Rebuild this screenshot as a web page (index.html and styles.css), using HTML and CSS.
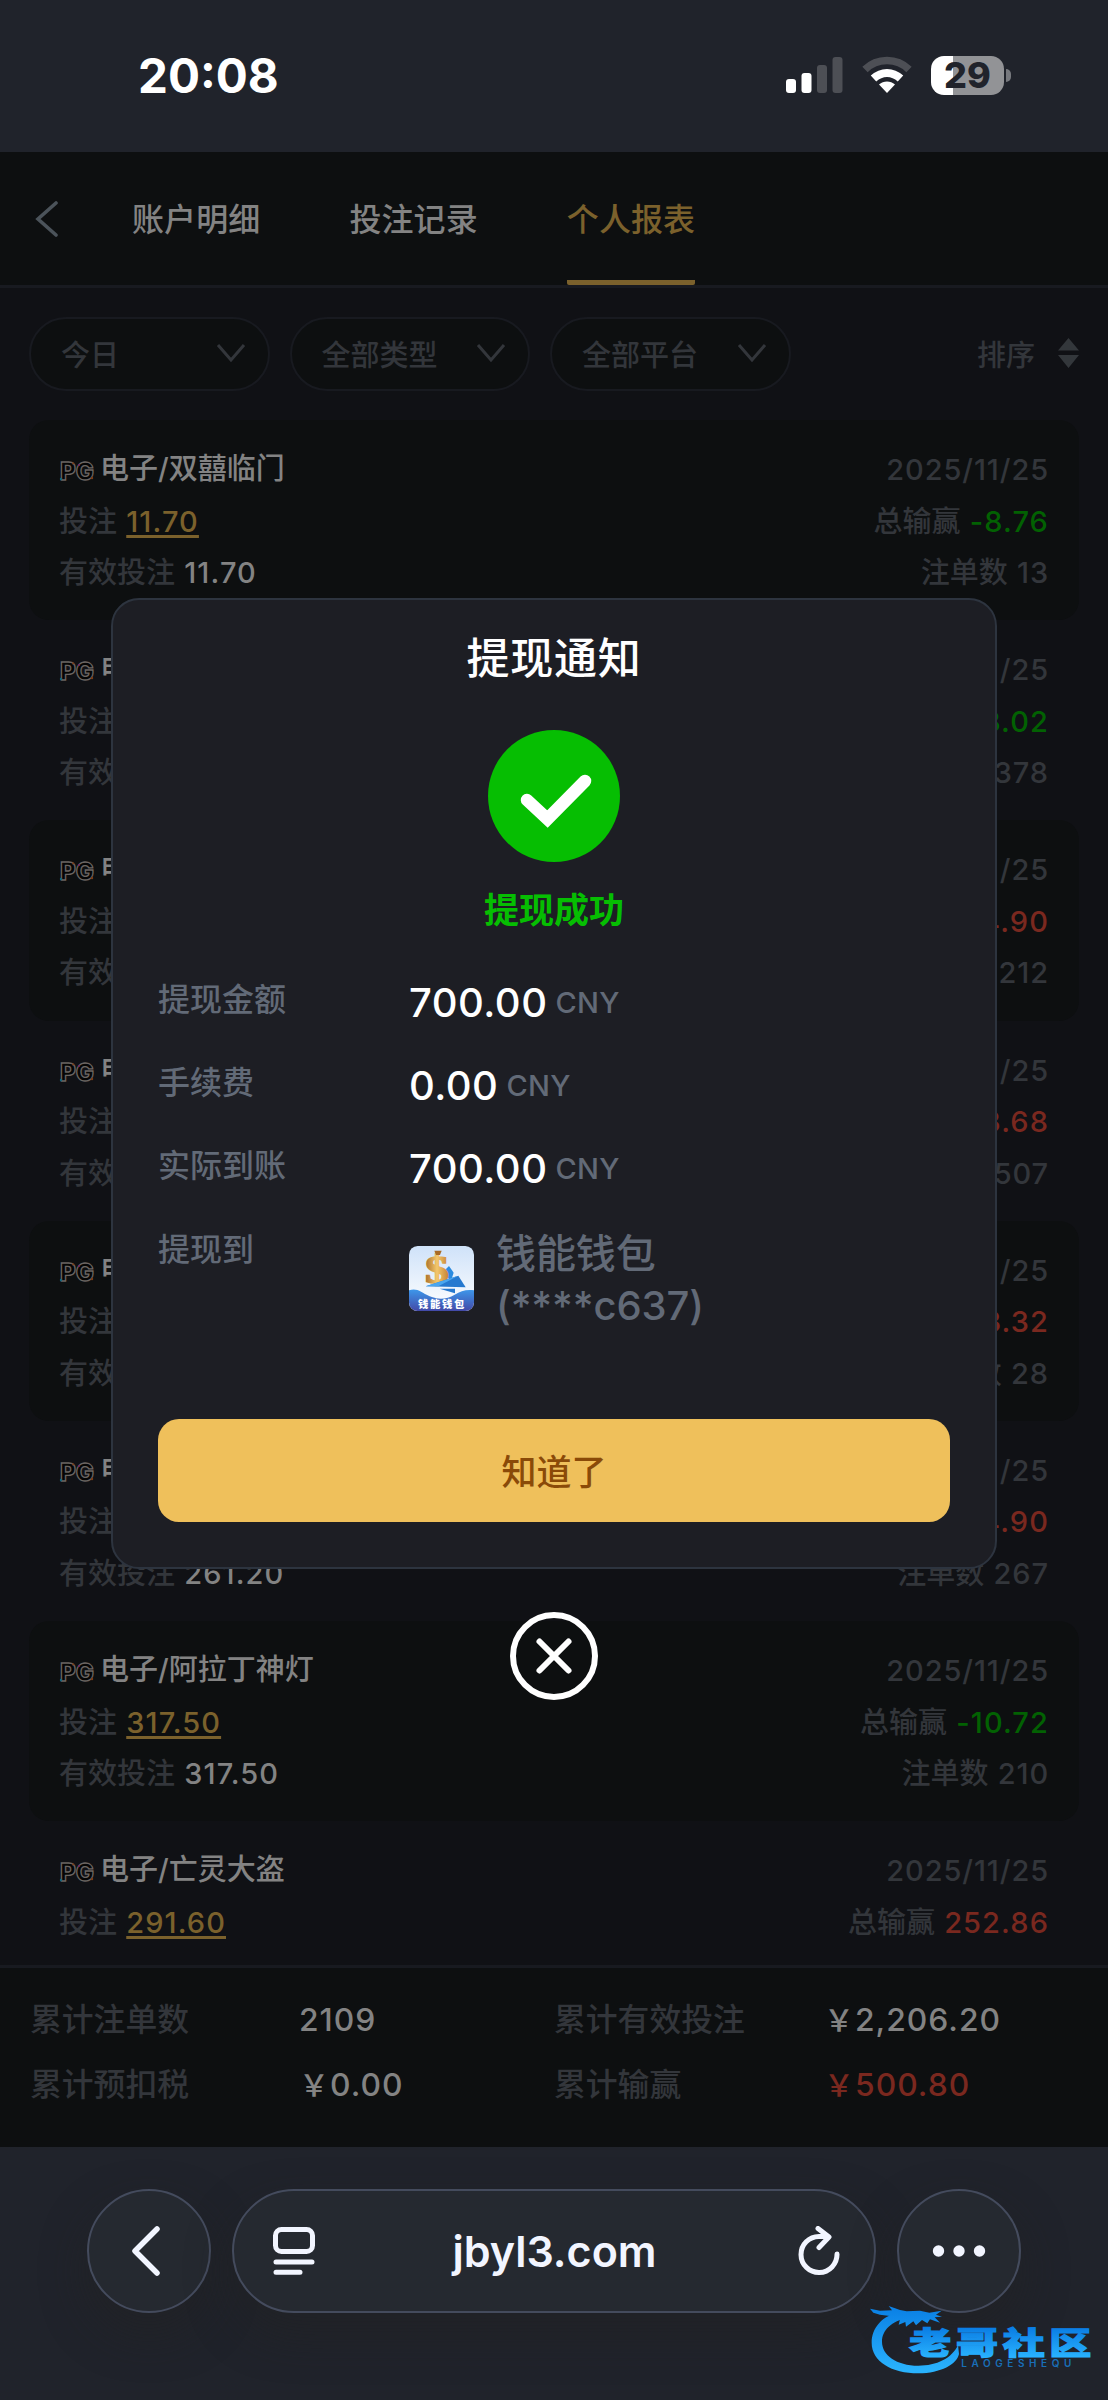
FILE: index.html
```
<!DOCTYPE html>
<html lang="zh-CN">
<head>
    <meta charset="UTF-8">
    <meta name="viewport" content="width=device-width, initial-scale=1.0">
    <title>个人报表</title>
    <link rel="stylesheet" href="styles.css">
</head>
<body>
    <svg class="defs">
        <symbol id="pg" viewBox="0 0 36 20">
            <text class="pg-text" x="1" y="18.500" textLength="34" lengthAdjust="spacingAndGlyphs">PG</text>
            <circle cx="2" cy="18" r="1.200" fill="#17687c"/>
            <circle cx="14" cy="2.500" r="1" fill="#7b3c16"/>
            <circle cx="20" cy="4" r="1" fill="#7a2260"/>
            <circle cx="33" cy="17" r="1.200" fill="#7b3c16"/>
        </symbol>
        <symbol id="down" viewBox="0 0 30 20">
            <path d="M2 2l13 15L28 2" fill="none" stroke="currentColor" stroke-width="3"/>
        </symbol>
    </svg>

    <header class="status-bar">
        <span class="time">20:08</span>
        <div class="status-icons">
            <svg width="57" height="38" viewBox="0 0 57 38">
                <rect x="0" y="23" width="10" height="14" rx="3" fill="#fff"/>
                <rect x="15.5" y="17" width="10" height="20" rx="3" fill="#fff"/>
                <rect x="31" y="9" width="10" height="28" rx="3" fill="#4d4f55"/>
                <rect x="46.5" y="1" width="10" height="36" rx="3" fill="#4d4f55"/>
            </svg>
            <svg width="50" height="38" viewBox="0 0 50 38">
                <path d="M3 13.5C15 1.500 35 1.500 47 13.500" fill="none" stroke="#4d4f55" stroke-width="7.500"/>
                <path d="M11.500 22.500C19.500 15 30.500 15 38.500 22.500" fill="none" stroke="#fff" stroke-width="8"/>
                <path d="M25 37l-8-8.500c4.500-4 11.500-4 16 0z" fill="#fff"/>
            </svg>
            <div class="battery"><span>29</span></div>
        </div>
    </header>

    <nav class="nav">
        <svg class="nav-back" width="24" height="36" viewBox="0 0 24 36"><path d="M21 2L3 18l18 16" fill="none" stroke="#4b535a" stroke-width="3.600" stroke-linecap="round"/></svg>
        <a class="tab">账户明细</a>
        <a class="tab">投注记录</a>
        <a class="tab active">个人报表</a>
    </nav>

    <div class="filters">
        <div class="select"><span>今日</span><svg width="30" height="20"><use href="#down"/></svg></div>
        <div class="select"><span>全部类型</span><svg width="30" height="20"><use href="#down"/></svg></div>
        <div class="select"><span>全部平台</span><svg width="30" height="20"><use href="#down"/></svg></div>
        <div class="sort">
            <span>排序</span>
            <svg width="21" height="30" viewBox="0 0 21 30"><path d="M10.500 0L21 12.500H0zM10.500 30L21 17H0z" fill="#33373b"/></svg>
        </div>
    </div>

    <main class="list">
        <section class="card">
            <div class="row"><div class="game"><svg width="36" height="20"><use href="#pg"/></svg>电子/双囍临门</div><span class="num">2025/11/25</span></div>
            <div class="row"><div>投注 <a class="bet">11.70</a></div><div>总输赢 <b class="win">-8.76</b></div></div>
            <div class="row"><div>有效投注 <b>11.70</b></div><div>注单数 <span class="num">13</span></div></div>
        </section>
        <section class="card">
            <div class="row"><div class="game"><svg width="36" height="20"><use href="#pg"/></svg>电子</div><span class="num">2025/11/25</span></div>
            <div class="row"><div>投注</div><div>总输赢 <b class="win">-3.02</b></div></div>
            <div class="row"><div>有效投注</div><div>注单数 <span class="num">378</span></div></div>
        </section>
        <section class="card">
            <div class="row"><div class="game"><svg width="36" height="20"><use href="#pg"/></svg>电子</div><span class="num">2025/11/25</span></div>
            <div class="row"><div>投注</div><div>总输赢 <b class="lose">4.90</b></div></div>
            <div class="row"><div>有效投注</div><div>注单数 <span class="num">212</span></div></div>
        </section>
        <section class="card">
            <div class="row"><div class="game"><svg width="36" height="20"><use href="#pg"/></svg>电子</div><span class="num">2025/11/25</span></div>
            <div class="row"><div>投注</div><div>总输赢 <b class="lose">3.68</b></div></div>
            <div class="row"><div>有效投注</div><div>注单数 <span class="num">507</span></div></div>
        </section>
        <section class="card">
            <div class="row"><div class="game"><svg width="36" height="20"><use href="#pg"/></svg>电子</div><span class="num">2025/11/25</span></div>
            <div class="row"><div>投注</div><div>总输赢 <b class="lose">3.32</b></div></div>
            <div class="row"><div>有效投注</div><div>注单数 <span class="num">28</span></div></div>
        </section>
        <section class="card">
            <div class="row"><div class="game"><svg width="36" height="20"><use href="#pg"/></svg>电子</div><span class="num">2025/11/25</span></div>
            <div class="row"><div>投注</div><div>总输赢 <b class="lose">4.90</b></div></div>
            <div class="row"><div>有效投注 <b>261.20</b></div><div>注单数 <span class="num">267</span></div></div>
        </section>
        <section class="card">
            <div class="row"><div class="game"><svg width="36" height="20"><use href="#pg"/></svg>电子/阿拉丁神灯</div><span class="num">2025/11/25</span></div>
            <div class="row"><div>投注 <a class="bet">317.50</a></div><div>总输赢 <b class="win">-10.72</b></div></div>
            <div class="row"><div>有效投注 <b>317.50</b></div><div>注单数 <span class="num">210</span></div></div>
        </section>
        <section class="card">
            <div class="row"><div class="game"><svg width="36" height="20"><use href="#pg"/></svg>电子/亡灵大盗</div><span class="num">2025/11/25</span></div>
            <div class="row"><div>投注 <a class="bet">291.60</a></div><div>总输赢 <b class="lose">252.86</b></div></div>
        </section>
    </main>

    <footer class="summary">
        <span>累计注单数</span><b>2109</b>
        <span>累计有效投注</span><b><i>￥</i>2,206.20</b>
        <span>累计预扣税</span><b><i>￥</i>0.00</b>
        <span>累计输赢</span><b class="lose"><i>￥</i>500.80</b>
    </footer>

    <div class="toolbar">
        <div class="glass round">
            <svg width="34" height="50" viewBox="0 0 34 50"><path d="M25 3L3 25l22 22" fill="none" stroke="#f2f5ff" stroke-width="5.500" stroke-linecap="round" stroke-linejoin="round"/></svg>
        </div>
        <div class="glass address">
            <svg width="42" height="48" viewBox="0 0 42 48" fill="none" stroke="#f2f5ff" stroke-width="5" stroke-linecap="round">
                <rect x="2.500" y="2.500" width="37" height="22" rx="6"/>
                <path d="M3 35h36M3 45.300h24"/>
            </svg>
            <span class="url">jbyl3.com</span>
            <svg width="42" height="50" viewBox="0 0 42 50" fill="none" stroke="#f2f5ff" stroke-width="5" stroke-linecap="round" stroke-linejoin="round">
                <path d="M39 28A18 18 0 1 1 21 10.500h9M20 2.500l11 8.500-10 10.500"/>
            </svg>
        </div>
        <div class="glass round">
            <svg width="54" height="12" viewBox="0 0 54 12" fill="#f2f5ff"><circle cx="6.500" cy="6" r="5.700"/><circle cx="27" cy="6" r="5.700"/><circle cx="47.500" cy="6" r="5.700"/></svg>
        </div>
    </div>

    <div class="mask">
        <div class="modal">
            <h2>提现通知</h2>
            <svg class="ok" width="132" height="132" viewBox="0 0 132 132">
                <circle cx="66" cy="66" r="66" fill="#06be02"/>
                <path d="M39 70l20.500 19L97 51" fill="none" stroke="#fff" stroke-width="12.500" stroke-linecap="round"/>
            </svg>
            <p class="result">提现成功</p>
            <dl class="detail">
                <dt>提现金额</dt><dd><b>700.00</b><small>CNY</small></dd>
                <dt>手续费</dt><dd><b>0.00</b><small>CNY</small></dd>
                <dt>实际到账</dt><dd><b>700.00</b><small>CNY</small></dd>
                <dt>提现到</dt>
                <dd class="wallet">
                    <svg width="65" height="65" viewBox="0 0 195 195">
                        <defs>
                            <linearGradient id="sky" x1="0" y1="0" x2="0" y2="1"><stop offset="0" stop-color="#cfe2f9"/><stop offset="1" stop-color="#fff"/></linearGradient>
                            <linearGradient id="sea" x1="0" y1="0" x2="0" y2="1"><stop offset="0" stop-color="#3d97ea"/><stop offset="1" stop-color="#4349a8"/></linearGradient>
                            <linearGradient id="gold" x1="0" y1="0" x2="1" y2="0"><stop offset="0" stop-color="#ab6f2a"/><stop offset=".5" stop-color="#f3c76c"/><stop offset="1" stop-color="#c58232"/></linearGradient>
                            <clipPath id="tile"><rect width="195" height="195" rx="26"/></clipPath>
                        </defs>
                        <g clip-path="url(#tile)">
                            <rect width="195" height="195" fill="url(#sky)"/>
                            <path d="M0 133c25-8 36 6 62 18 30 12 52 8 75-5 18-10 35-17 58-13v62H0z" fill="url(#sea)"/>
                            <path d="M100 80l20-20 14 20-8 24z" fill="#2a8be0"/>
                            <text class="dollar" x="49" y="111" textLength="70" lengthAdjust="spacingAndGlyphs">$</text>
                            <path d="M76 14h22l-5 13H81z" fill="#a96b25"/>
                            <path d="M50 121L148 89l22 35z" fill="#2679cf"/>
                            <path d="M50 121L148 89l-60 32z" fill="#49a6ef"/>
                            <path d="M92 128h46v14z" fill="#2679cf"/>
                            <text class="tile-text" x="27" y="186" textLength="139">钱能钱包</text>
                        </g>
                    </svg>
                    <span>钱能钱包<br>(****c637)</span>
                </dd>
            </dl>
            <button class="confirm">知道了</button>
        </div>
        <svg class="close" width="88" height="88" viewBox="0 0 88 88" fill="none" stroke="#fff">
            <circle cx="44" cy="44" r="41" stroke-width="6"/>
            <path d="M29.500 29.500l29 29M58.500 29.500l-29 29" stroke-width="6" stroke-linecap="round"/>
        </svg>
    </div>

    <svg class="watermark" width="268" height="120" viewBox="0 0 804 360">
        <defs>
            <linearGradient id="blue" gradientUnits="userSpaceOnUse" x1="0" y1="90" x2="0" y2="270"><stop offset="0" stop-color="#0b82e6"/><stop offset="1" stop-color="#29b2fd"/></linearGradient>
            <linearGradient id="blueText" x1="0" y1="0" x2="0" y2="1"><stop offset=".2" stop-color="#0a7de4"/><stop offset=".9" stop-color="#2ab4ff"/></linearGradient>
        </defs>
        <path d="M192 94C122 104 95 148 95 188c0 56 60 92 140 92 68 0 116-28 122-58l-3-27c-18 40-64 62-119 62-66 0-109-32-109-72 0-34 28-62 78-72z" fill="url(#blue)"/>
        <path d="M90 86L120 92 156 91 146 78 180 90 200 94 240 92 268 98 305 92 288 104 306 110 284 112 300 128 270 118 262 130 246 120 228 136 220 124 198 140 196 126 176 134 180 118 160 120 150 108 120 104 100 98z" fill="url(#blue)"/>
        <text class="mark" transform="translate(208 221) scale(1 .72)" textLength="546" lengthAdjust="spacing" fill="url(#blueText)" stroke="url(#blueText)">老哥社区</text>
        <text class="mark-sub" x="364" y="260" textLength="330" lengthAdjust="spacing">LAOGESHEQU</text>
    </svg>
</body>
</html>
```
FILE: styles.css
```
* {
    box-sizing: border-box;
}
body {
    position: relative;
    display: flex;
    flex-direction: column;
    width: 1108px;
    height: 2400px;
    margin: 0;
    overflow: hidden;
    background: #101115;
    color: #33363b;
    font-family: Inter, "Noto Sans CJK SC", sans-serif;
    font-size: 29px;
    font-weight: 500;
}
svg {
    display: block;
    flex: none;
}
b, i {
    font-weight: 500;
    font-style: normal;
}
.defs {
    display: none;
}

/* 状态栏 */
.status-bar {
    display: flex;
    flex: none;
    justify-content: space-between;
    height: 152px;
    padding: 46px 104px 0 138px;
    background: #20232b;
}
.time {
    color: #fff;
    font-size: 47.5px;
    font-weight: 700;
    line-height: 60px;
}
.status-icons {
    display: flex;
    gap: 19px;
    height: 58px;
    align-items: center;
}
.battery {
    position: relative;
    width: 73px;
    height: 39px;
    border-radius: 13px;
    background: linear-gradient(90deg, #fff 30%, #929396 30%);
    color: #20232b;
    font-size: 36px;
    font-weight: 800;
    line-height: 38px;
    text-align: center;
}
.battery::after {
    content: "";
    position: absolute;
    top: 13px;
    right: -7px;
    width: 5px;
    height: 13px;
    border-radius: 0 5px 5px 0;
    background: #77797e;
}

/* 顶部导航 */
.nav {
    display: flex;
    flex: none;
    height: 136px;
    padding-left: 35px;
    border-bottom: 3px solid #181a20;
    background: #0d0f10;
}
.nav-back {
    margin: 49px 73px 0 0;
}
.tab {
    height: 133px;
    margin-right: 89px;
    color: #838383;
    font-size: 32px;
    letter-spacing: .1px;
    line-height: 135px;
}
.tab.active {
    border-bottom: 5px solid #7b612c;
    border-radius: 2px;
    color: #7b612c;
}

/* 筛选 */
.filters {
    display: flex;
    flex: none;
    gap: 20px;
    height: 132px;
    padding: 29px 29px 0;
}
.select {
    display: flex;
    align-items: center;
    justify-content: space-between;
    width: 240.5px;
    height: 74px;
    padding: 0 22px 2px 30px;
    border: 2px solid #181a20;
    border-radius: 37px;
    background: #0d0f10;
}
.sort {
    display: flex;
    align-items: center;
    gap: 23px;
    height: 72px;
    margin-left: auto;
}

/* 列表 */
.list {
    flex: none;
    height: 1545px;
    overflow: hidden;
    padding: 0 29px;
}
.card {
    height: 200.2px;
    padding: 24px 30px 0;
    border-radius: 20px;
}
.card:nth-child(odd) {
    background: #0d0f10;
}
.row {
    display: flex;
    justify-content: space-between;
    height: 51.5px;
    line-height: 52px;
    word-spacing: 1.5px;
}
.game {
    display: flex;
    gap: 5px;
    color: #838383;
    line-height: 50px;
}
.game svg {
    margin-top: 17px;
}
.pg-text {
    fill: #050505;
    stroke: #6b6562;
    stroke-width: 1.3px;
    font-size: 24px;
    font-weight: 800;
}
.card b {
    color: #838383;
}
.card b, .num, .bet {
    letter-spacing: 1.1px;
}
.card .num {
    letter-spacing: .9px;
}
.card .win {
    color: #026102;
}
.card .lose {
    color: #7a281f;
}
.bet {
    color: #7b612c;
    text-decoration: underline;
    text-decoration-skip-ink: none;
    text-decoration-thickness: 3px;
    text-underline-offset: 3px;
}

/* 累计 */
.summary {
    display: grid;
    flex: none;
    grid-template-columns: 269px 255px 270px 1fr;
    grid-auto-rows: 65px;
    height: 182px;
    padding: 19px 0 0 30px;
    border-top: 3px solid #181a20;
    background: #0d0f10;
    font-size: 31.8px;
    line-height: 65px;
}
.summary b {
    color: #838383;
    letter-spacing: 1px;
}
.summary i {
    font-size: 30px;
}
.summary .lose {
    color: #7a281f;
}

/* 浏览器工具栏 */
.toolbar {
    display: flex;
    flex: 1;
    gap: 21px;
    padding: 42px 87px 0;
    background: #20232b;
}
.glass {
    display: flex;
    align-items: center;
    height: 124px;
    border: 2px solid #444b5d;
    border-radius: 62px;
    background: #252930;
    box-shadow: 0 20px 44px rgba(34, 34, 34, .5);
}
.round {
    justify-content: center;
    width: 124px;
}
.address {
    flex: 1;
    justify-content: space-between;
    padding: 0 34px 0 39px;
}
.url {
    margin-right: 4px;
    color: #f2f5ff;
    font-size: 43px;
    font-weight: 600;
}

/* 提现弹窗 */
.mask {
    position: absolute;
    top: 598px;
    left: 111px;
    width: 886px;
}
.modal {
    display: flex;
    flex-direction: column;
    align-items: center;
    height: 971px;
    padding: 28px 45px 0;
    border: 2px solid #2d343f;
    border-radius: 28px;
    background: #1d1e24;
}
.modal h2 {
    margin: 0 0 42px;
    color: #fff;
    font-size: 43px;
    font-weight: 500;
    letter-spacing: .8px;
    line-height: 60px;
}
.result {
    margin: 21px 0 29px;
    color: #06be02;
    font-size: 35px;
    font-weight: 700;
    line-height: 54px;
}
.detail {
    display: grid;
    grid-template-columns: 251px 1fr;
    grid-auto-rows: 83.2px;
    width: 100%;
    height: 453px;
    margin: 0;
}
.detail dt {
    color: #626a77;
    font-size: 32px;
    line-height: 67px;
}
.detail dd {
    display: flex;
    margin: 0;
    color: #fff;
    line-height: 74px;
}
.detail b {
    margin-right: 8px;
    font-size: 40px;
    letter-spacing: .5px;
}
.detail small {
    color: #626a77;
    font-size: 29px;
    letter-spacing: .3px;
}
.detail .wallet {
    gap: 22px;
    padding-top: 12px;
    color: #626a77;
    font-size: 40px;
    letter-spacing: -.1px;
    line-height: 52px;
}
.wallet svg {
    margin-top: 18px;
}
.dollar {
    fill: url(#gold);
    stroke: url(#gold);
    stroke-width: 5px;
    font-family: "Liberation Serif", serif;
    font-size: 118px;
    font-weight: 700;
}
.tile-text {
    fill: #fff;
    font-family: "Noto Sans CJK SC", sans-serif;
    font-size: 31px;
    font-weight: 900;
}
.confirm {
    flex: none;
    width: 792px;
    height: 103px;
    padding-bottom: 3px;
    border: 0;
    border-radius: 21px;
    background: #efc05b;
    color: #8a4a08;
    font: 500 35px Inter, "Noto Sans CJK SC", sans-serif;
}
.close {
    margin: 43px auto 0;
}

/* 水印 */
.watermark {
    position: absolute;
    right: 0;
    bottom: 0;
}
.mark {
    font-family: "Noto Sans CJK SC", sans-serif;
    font-size: 126px;
    font-weight: 900;
    stroke-width: 5px;
}
.mark-sub {
    fill: #196fb8;
    font-size: 30px;
    font-weight: 600;
}
```
